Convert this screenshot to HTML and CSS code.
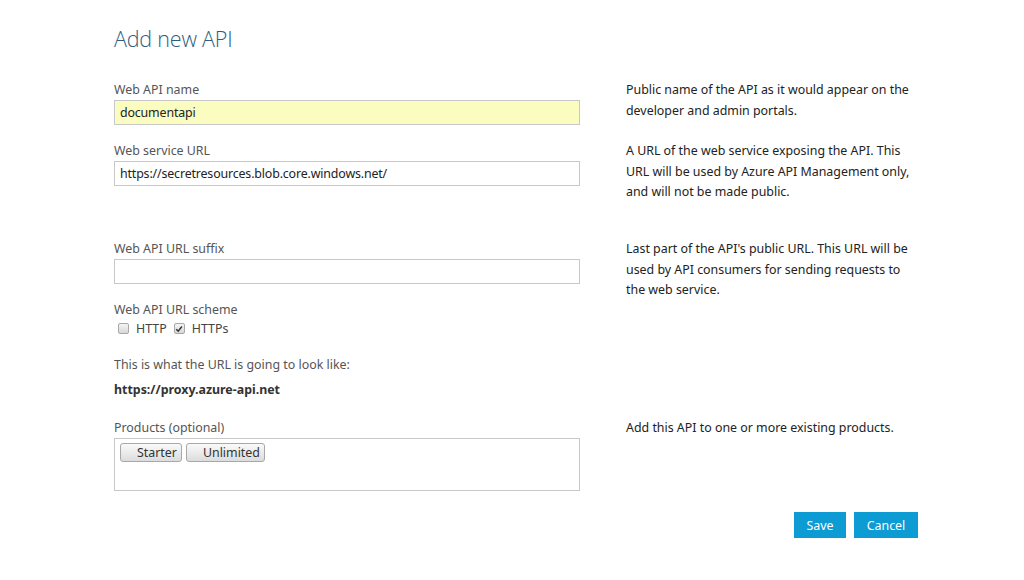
FILE: index.html
```html
<!DOCTYPE html>
<html>
<head>
<meta charset="utf-8">
<link rel="stylesheet" href="styles.css">
</head>
<body>
<div class="page">
  <h1 class="title">Add new API</h1>

  <div class="row row-name">
    <div class="field">
      <label class="label">Web API name</label>
      <div class="input input-filled">documentapi</div>
    </div>
    <p class="help">Public name of the API as it would appear on the developer and admin portals.</p>
  </div>

  <div class="row row-url">
    <div class="field">
      <label class="label">Web service URL</label>
      <div class="input">https://secretresources.blob.core.windows.net/</div>
    </div>
    <p class="help">A URL of the web service exposing the API. This URL will be used by Azure API Management only, and will not be made public.</p>
  </div>

  <div class="row row-suffix">
    <div class="field">
      <label class="label">Web API URL suffix</label>
      <div class="input"></div>
    </div>
    <p class="help">Last part of the API's public URL. This URL will be used by API consumers for sending requests to the web service.</p>
  </div>

  <div class="row row-scheme">
    <div class="field">
      <label class="label">Web API URL scheme</label>
      <div class="checks">
        <span class="check"><span class="box"></span>HTTP</span>
        <span class="check"><span class="box checked"><svg viewBox="0 0 10 10" width="8" height="8"><path d="M1.5 5.2 L4 7.6 L8.6 1.8" fill="none" stroke="#333" stroke-width="1.8"/></svg></span>HTTPs</span>
      </div>
      <p class="preview-label">This is what the URL is going to look like:</p>
      <p class="preview-url">https://proxy.azure-api.net</p>
    </div>
    <div></div>
  </div>

  <div class="row row-products">
    <div class="field">
      <label class="label">Products (optional)</label>
      <div class="tagbox">
        <span class="tag">Starter</span>
        <span class="tag">Unlimited</span>
      </div>
    </div>
    <p class="help">Add this API to one or more existing products.</p>
  </div>

  <div class="actions">
    <button class="btn btn-save">Save</button>
    <button class="btn btn-cancel">Cancel</button>
  </div>
</div>
</body>
</html>
```

FILE: styles.css
```css
* { box-sizing: border-box; }
html, body { margin: 0; padding: 0; background: #fff; }
body {
  font-family: "Noto Sans", "Open Sans", sans-serif;
  font-size: 12.4px;
  color: #333;
  width: 1024px;
  height: 580px;
  overflow: hidden;
}
.page {
  padding: 24px 0 0 114px;
  width: 1024px;
}
.title {
  margin: 0 0 27px 0;
  font-family: "Open Sans", "Noto Sans", sans-serif;
  font-weight: 300;
  font-size: 21.5px;
  line-height: 30px;
  color: #2f5d80;
  letter-spacing: -0.2px;
}
.row {
  display: grid;
  grid-template-columns: 466px 290px;
  column-gap: 46px;
  align-items: start;
}
.row-name { height: 61px; }
.row-url { height: 98px; }
.row-suffix { height: 61px; }
.row-scheme { height: 118px; }
.row-products { margin-bottom: 21px; }

.label {
  display: block;
  color: #555;
  line-height: 17px;
  margin-bottom: 2px;
}
.input {
  height: 25px;
  border: 1px solid #c8c8c8;
  padding: 0 5px;
  line-height: 23px;
  color: #222;
  background: #fff;
  letter-spacing: -0.15px;
}
.input-filled { background: #fafcc0; }
.help {
  margin: 0;
  line-height: 20.5px;
  color: #222;
  margin-top: -1px;
}
.checks {
  display: flex;
  align-items: center;
  height: 17px;
  padding-left: 4px;
  color: #444;
}
.check {
  display: inline-flex;
  align-items: center;
  margin-right: 7px;
}
.box {
  width: 11px;
  height: 11px;
  border: 1px solid #a8a8a8;
  border-radius: 2px;
  background: linear-gradient(#f4f4f4, #d8d8d8);
  margin-right: 7px;
  display: inline-flex;
  align-items: center;
  justify-content: center;
}
.preview-label {
  margin: 19px 0 0 0;
  line-height: 17px;
  color: #555;
}
.preview-url {
  margin: 8px 0 0 0;
  line-height: 17px;
  font-weight: 700;
  color: #333;
}
.tagbox {
  height: 53px;
  border: 1px solid #c8c8c8;
  padding: 4px 5px;
  display: flex;
  align-items: flex-start;
  gap: 4px;
}
.tag {
  display: inline-block;
  height: 19px;
  line-height: 17px;
  padding: 0 4px 0 16px;
  border: 1px solid #a8a8a8;
  border-radius: 3px;
  background: linear-gradient(#fafafa, #dcdcdc);
  color: #333;
}
.actions {
  width: 804px;
  display: flex;
  justify-content: flex-end;
  gap: 8px;
}
.btn {
  font-family: inherit;
  font-size: 12.4px;
  border: none;
  height: 26px;
  background: #0c9bd2;
  color: #fff;
  cursor: pointer;
  padding: 0;
}
.btn-save { width: 52px; }
.btn-cancel { width: 64px; }
```
